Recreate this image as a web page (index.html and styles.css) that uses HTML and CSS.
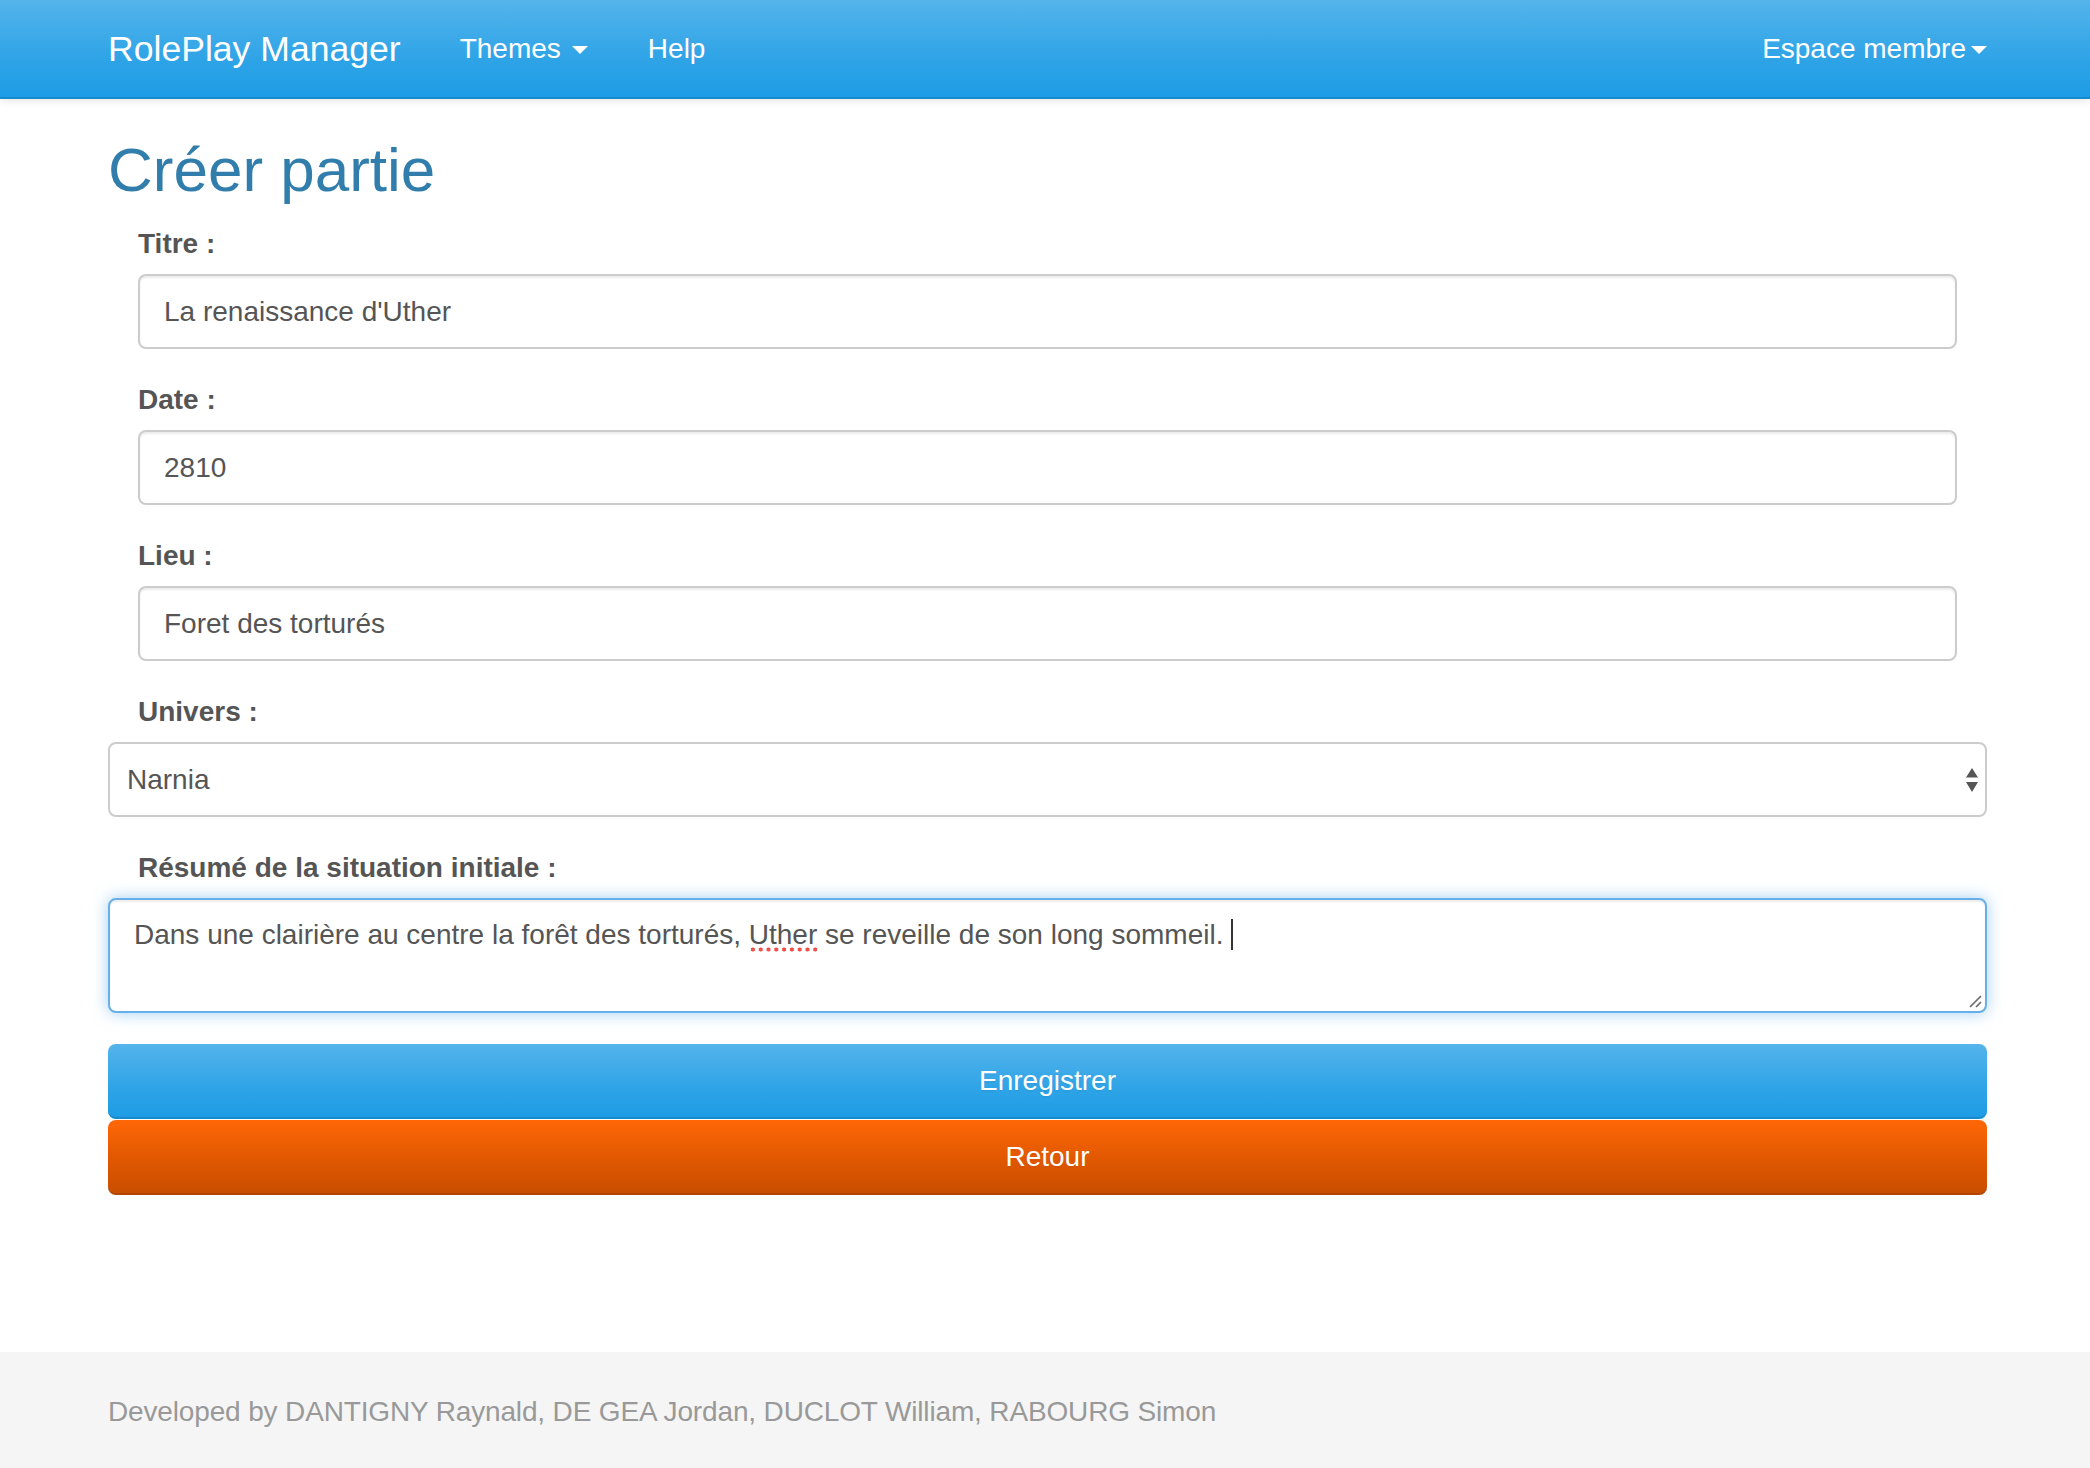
FILE: index.html
```html
<!DOCTYPE html>
<html lang="fr">
<head>
<meta charset="utf-8">
<title>RolePlay Manager - Créer partie</title>
<link rel="stylesheet" href="styles.css">
</head>
<body>
<header class="navbar">
  <div class="navbar-inner">
    <a class="brand">RolePlay Manager</a>
    <nav class="nav">
      <a class="nav-link">Themes<span class="caret caret-wide"></span></a>
      <a class="nav-link">Help</a>
    </nav>
    <nav class="nav nav-right">
      <a class="nav-link">Espace membre<span class="caret caret-tight"></span></a>
    </nav>
  </div>
</header>

<main class="main">
  <h1 class="title">Créer partie</h1>

  <div class="group">
    <div class="label">Titre :</div>
    <div class="inset"><div class="control">La renaissance d'Uther</div></div>
  </div>

  <div class="group">
    <div class="label">Date :</div>
    <div class="inset"><div class="control">2810</div></div>
  </div>

  <div class="group">
    <div class="label">Lieu :</div>
    <div class="inset"><div class="control">Foret des torturés</div></div>
  </div>

  <div class="group">
    <div class="label">Univers :</div>
    <div class="control select">
      <span>Narnia</span>
      <svg class="select-arrows" width="12" height="24" viewBox="0 0 12 24"><path d="M0 9.5 L6 0 L12 9.5 Z M0 14 L12 14 L6 24 Z" fill="#555"/></svg>
    </div>
  </div>

  <div class="group">
    <div class="label">Résumé de la situation initiale :</div>
    <div class="textarea">Dans une clairière au centre la forêt des torturés, <span class="misspelled">Uther</span> se reveille de son long sommeil. <span class="cursor"></span>
      <svg class="grip" width="14" height="14" viewBox="0 0 14 14"><path d="M13 2 L2 13 M13 8 L8 13" stroke="#6b6b6b" stroke-width="1.6" fill="none"/></svg>
    </div>
  </div>

  <div class="btn btn-primary">Enregistrer</div>
  <div class="btn btn-warning">Retour</div>
</main>

<footer class="footer">
  <div class="footer-text">Developed by DANTIGNY Raynald, DE GEA Jordan, DUCLOT William, RABOURG Simon</div>
</footer>
</body>
</html>
```

FILE: styles.css
```css
* { box-sizing: border-box; }

html, body { margin: 0; }

body {
  font-family: "Liberation Sans", Arial, Helvetica, sans-serif;
  font-size: 28px;
  line-height: 40px;
  color: #555;
  background: #fff;
  min-height: 100vh;
  display: flex;
  flex-direction: column;
}

/* Navbar */
.navbar {
  height: 99px;
  background: linear-gradient(#54b4eb, #2fa4e7 60%, #1d9ce5);
  border-bottom: 2px solid #178acc;
  box-shadow: 0 2px 8px rgba(0, 0, 0, 0.1);
  position: relative;
  z-index: 1;
}

.navbar-inner {
  margin-left: 108px;
  width: 1879px;
  height: 100%;
  display: flex;
  align-items: center;
}

.brand {
  font-size: 35.6px;
  color: #fff;
  margin-right: 29px;
}

.nav { display: flex; }

.nav-link {
  color: #fff;
  padding: 0 30px;
  display: flex;
  align-items: center;
}

.nav-right { margin-left: auto; }
.nav-right .nav-link { padding-right: 0; }

.caret {
  width: 0;
  height: 0;
  border-top: 8px solid #fff;
  border-left: 8px solid transparent;
  border-right: 8px solid transparent;
  margin-top: 2px;
}
.caret-wide { margin-left: 11px; }
.caret-tight { margin-left: 5px; }

/* Main */
.main {
  margin-left: 108px;
  width: 1879px;
}

.title {
  margin: 37px 0 20px;
  font-size: 62px;
  line-height: 68px;
  font-weight: normal;
  color: #317eac;
}

.group { margin-bottom: 31px; }

.label {
  padding-left: 30px;
  font-weight: bold;
  margin-bottom: 10px;
}

.inset { padding: 0 30px 0 30px; }

.control {
  height: 75px;
  border: 2px solid #ccc;
  border-radius: 8px;
  padding: 0 24px;
  display: flex;
  align-items: center;
  background: #fff;
  box-shadow: inset 0 2px 2px rgba(0, 0, 0, 0.075);
}

.select {
  padding: 0 7px 0 17px;
  justify-content: space-between;
  box-shadow: none;
}

.select-arrows { margin-top: 1px; }

.textarea {
  position: relative;
  height: 115px;
  border: 2px solid #66afe9;
  border-radius: 8px;
  padding: 15px 24px 12px;
  background: #fff;
  box-shadow: inset 0 2px 2px rgba(0, 0, 0, 0.075), 0 0 16px rgba(102, 175, 233, 0.6);
}

.misspelled {
  padding-bottom: 2px;
  background-image: radial-gradient(circle, #f0504a 1.8px, transparent 2.3px);
  background-size: 7.8px 5px;
  background-repeat: repeat-x;
  background-position: 0 100%;
}

.cursor {
  display: inline-block;
  width: 2px;
  height: 31px;
  background: #333;
  vertical-align: -6px;
}

.grip {
  position: absolute;
  right: 3px;
  bottom: 3px;
}

/* Buttons */
.btn {
  display: flex;
  justify-content: center;
  align-items: center;
  height: 75px;
  border-radius: 8px;
  color: #fff;
  text-shadow: 0 2px 0 rgba(0, 0, 0, 0.05);
}

.btn-primary {
  background: linear-gradient(#54b4eb, #2fa4e7 60%, #1d9ce5);
  border-bottom: 2px solid #178acc;
}

.btn-warning {
  margin-top: 1px;
  background: linear-gradient(#ff6707, #dd5600 60%, #c94e00);
  border-bottom: 2px solid #b34500;
}

/* Footer */
.footer {
  margin-top: auto;
  height: 116px;
  background: #f5f5f5;
  padding-top: 40px;
}

.footer-text {
  margin-left: 108px;
  color: #999;
  letter-spacing: -0.15px;
}
```
